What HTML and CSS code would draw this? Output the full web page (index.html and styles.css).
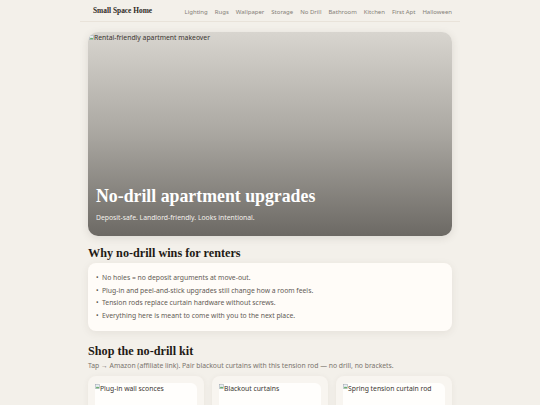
FILE: index.html
```html
<!DOCTYPE html>
<html lang="en">
<head>
    <meta charset="UTF-8">
    <meta name="viewport" content="width=device-width, initial-scale=1.0">
    <title>Small Space Home - No Drill</title>
    <link rel="stylesheet" href="styles.css">
</head>
<body>
    <div class="page">
        <header class="site-header">
            <a class="brand" href="#">Small Space Home</a>
            <nav class="nav">
                <a href="#">Lighting</a>
                <a href="#">Rugs</a>
                <a href="#">Wallpaper</a>
                <a href="#">Storage</a>
                <a href="#">No Drill</a>
                <a href="#">Bathroom</a>
                <a href="#">Kitchen</a>
                <a href="#">First Apt</a>
                <a href="#">Halloween</a>
            </nav>
        </header>

        <main class="main">
            <section class="hero">
                <!-- image not loaded yet: show the alt placeholder -->
                <div class="img-ph">
                    <svg class="ph-icon" viewBox="0 0 6 6" width="5" height="5"><rect x="0.5" y="0.5" width="5" height="5" fill="#e9eef3" stroke="#9aa3ad" stroke-width="0.6"/><path d="M0.8 5.2 L2.4 3 L3.6 4.2 L4.4 3.4 L5.2 5.2 Z" fill="#5aa45a"/></svg>Rental-friendly apartment makeover
                </div>
                <div class="hero-text">
                    <h1>No-drill apartment upgrades</h1>
                    <p>Deposit-safe. Landlord-friendly. Looks intentional.</p>
                </div>
            </section>

            <section class="block">
                <h2>Why no-drill wins for renters</h2>
                <div class="card">
                    <ul class="reasons">
                        <li>No holes = no deposit arguments at move-out.</li>
                        <li>Plug-in and peel-and-stick upgrades still change how a room feels.</li>
                        <li>Tension rods replace curtain hardware without screws.</li>
                        <li>Everything here is meant to come with you to the next place.</li>
                    </ul>
                </div>
            </section>

            <section class="block block-shop">
                <h2>Shop the no-drill kit</h2>
                <p class="note">Tap &rarr; Amazon (affiliate link). Pair blackout curtains with this tension rod &mdash; no drill, no brackets.</p>
                <div class="products">
                    <a class="product" href="#">
                        <div class="img-ph product-img">
                            <svg class="ph-icon" viewBox="0 0 6 6" width="5" height="5"><rect x="0.5" y="0.5" width="5" height="5" fill="#e9eef3" stroke="#9aa3ad" stroke-width="0.6"/><path d="M0.8 5.2 L2.4 3 L3.6 4.2 L4.4 3.4 L5.2 5.2 Z" fill="#5aa45a"/></svg>Plug-in wall sconces
                        </div>
                    </a>
                    <a class="product" href="#">
                        <div class="img-ph product-img">
                            <svg class="ph-icon" viewBox="0 0 6 6" width="5" height="5"><rect x="0.5" y="0.5" width="5" height="5" fill="#e9eef3" stroke="#9aa3ad" stroke-width="0.6"/><path d="M0.8 5.2 L2.4 3 L3.6 4.2 L4.4 3.4 L5.2 5.2 Z" fill="#5aa45a"/></svg>Blackout curtains
                        </div>
                    </a>
                    <a class="product" href="#">
                        <div class="img-ph product-img">
                            <svg class="ph-icon" viewBox="0 0 6 6" width="5" height="5"><rect x="0.5" y="0.5" width="5" height="5" fill="#e9eef3" stroke="#9aa3ad" stroke-width="0.6"/><path d="M0.8 5.2 L2.4 3 L3.6 4.2 L4.4 3.4 L5.2 5.2 Z" fill="#5aa45a"/></svg>Spring tension curtain rod
                        </div>
                    </a>
                </div>
            </section>
        </main>
    </div>
</body>
</html>
```

FILE: styles.css
```css
body {
    margin: 0;
    padding: 0;
    background-color: #f3f0ea;
    color: #2a2520;
    font-family: "Noto Sans", "Open Sans", sans-serif;
    font-size: 6.8px;
}

.page {
    width: 380px;
    margin: 0 auto;
}

.site-header {
    display: flex;
    justify-content: space-between;
    align-items: center;
    height: 21px;
    padding: 0 8px 0 13px;
    border-bottom: 1px solid #e9e3da;
}

.brand {
    font-family: "Liberation Serif", Georgia, serif;
    font-weight: bold;
    font-size: 7.4px;
    color: #2f2a25;
    text-decoration: none;
}

.nav {
    display: flex;
    gap: 7px;
    padding-top: 2px;
}

.nav a {
    font-size: 6px;
    color: #857f78;
    text-decoration: none;
}

.main {
    padding: 10px 8px 0;
}

.hero {
    position: relative;
    height: 204px;
    border-radius: 10px;
    overflow: hidden;
    background: linear-gradient(to bottom, #d8d5cf 0%, #aaa7a1 50%, #6c6964 100%);
    box-shadow: 0 2px 8px rgba(60, 50, 40, 0.12);
}

.img-ph {
    display: flex;
    align-items: center;
    padding: 1px 1px 0;
    font-size: 6.8px;
    line-height: 9px;
    color: #3a3530;
}

.ph-icon {
    flex: none;
}

.hero-text {
    position: absolute;
    left: 8px;
    right: 8px;
    bottom: 14px;
    color: #fff;
}

.hero-text h1 {
    margin: 0 0 6px;
    font-family: "Liberation Serif", Georgia, serif;
    font-size: 17.8px;
    font-weight: bold;
}

.hero-text p {
    margin: 0;
    color: #f4f1ec;
}

.block {
    margin-top: 10px;
}

.block-shop {
    margin-top: 13px;
}

.block h2 {
    margin: 0 0 2px;
    font-family: "Liberation Serif", Georgia, serif;
    font-size: 12.2px;
    font-weight: bold;
    color: #1f1a15;
}

.card {
    background-color: #fffcf8;
    border-radius: 8px;
    padding: 9px 8px;
    box-shadow: 0 2px 8px rgba(60, 50, 40, 0.08);
}

.reasons {
    margin: 0;
    padding: 0;
    list-style: none;
    color: #5f5a54;
    line-height: 12.5px;
}

.reasons li::before {
    content: "\2022";
    display: inline-block;
    width: 6px;
    color: #5f5a54;
}

.note {
    margin: 0 0 6px;
    color: #7a746d;
}

.products {
    display: grid;
    grid-template-columns: repeat(3, 1fr);
    gap: 8px;
}

.product {
    display: block;
    padding: 7px;
    background-color: #f8f5f0;
    border-radius: 8px;
    box-shadow: 0 1px 6px rgba(60, 50, 40, 0.06);
    text-decoration: none;
}

.product-img {
    height: 90px;
    align-items: flex-start;
    background-color: #fffefc;
    border-radius: 6px;
    padding: 1px 0 0;
}
```
